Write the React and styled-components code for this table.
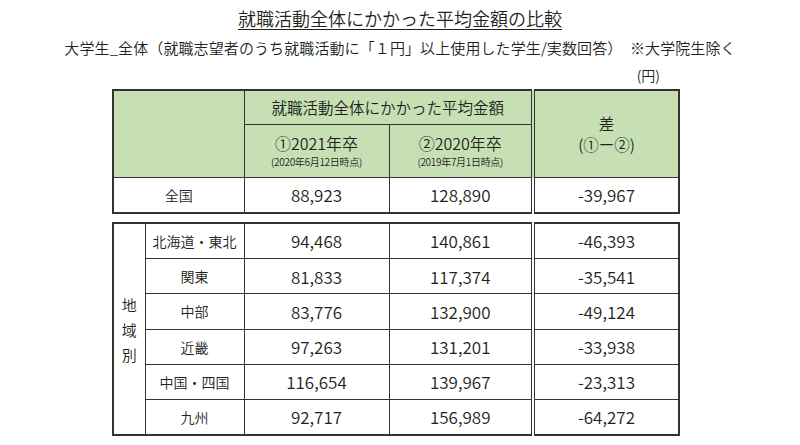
import React from 'react';
import styled, { createGlobalStyle } from 'styled-components';

const GlobalStyle = createGlobalStyle`
  html, body {
    margin: 0;
    padding: 0;
    background: #fff;
  }
  body {
    font-family: "Noto Sans CJK JP", "Noto Sans", sans-serif;
    font-weight: 350;
    color: #231f20;
  }
`;

const Page = styled.div`
  width: 800px;
  height: 445px;
  display: flex;
  flex-direction: column;
  align-items: center;
  overflow: hidden;
`;

const Title = styled.h1`
  margin: 6px 0 0;
  font-size: 18px;
  font-weight: 350;
  line-height: 24px;
  text-decoration: underline;
  text-underline-offset: 3px;
  text-decoration-thickness: 1px;
`;

const Subtitle = styled.div`
  margin-top: 8px;
  font-size: 15px;
  line-height: 20px;
  letter-spacing: 0.1px;
  white-space: nowrap;
`;

const Unit = styled.div`
  align-self: stretch;
  text-align: right;
  padding-right: 140px;
  font-size: 14px;
  line-height: 20px;
  margin-top: 7px;
`;

const Table = styled.table`
  align-self: flex-start;
  margin-left: 112px;
  width: 566px;
  border-collapse: collapse;
  table-layout: fixed;
  border: 2px solid #333;
  margin-top: ${p => p.$gap}px;
`;

const Cell = styled.td`
  border: 1.5px solid #333;
  padding: 0;
  text-align: center;
  vertical-align: middle;
  background: ${p => (p.$head ? '#c6e0b4' : '#fff')};
  height: ${p => p.$h}px;
  font-size: ${p => p.$size || 17}px;
  line-height: ${p => p.$lh || 1.15};
  ${p => p.$split && 'border-left: 4px double #333;'}
`;

const Small = styled.div`
  margin-top: 3px;
  font-size: 10px;
  line-height: 12px;
  letter-spacing: -0.3px;
`;

const Vertical = styled.div`
  display: flex;
  flex-direction: column;
  align-items: center;
  font-size: 15px;
  line-height: 25px;
`;

const regions = [
  ['北海道・東北', '94,468', '140,861', '-46,393'],
  ['関東', '81,833', '117,374', '-35,541'],
  ['中部', '83,776', '132,900', '-49,124'],
  ['近畿', '97,263', '131,201', '-33,938'],
  ['中国・四国', '116,654', '139,967', '-23,313'],
  ['九州', '92,717', '156,989', '-64,272'],
];

export default function App() {
  return (
    <Page>
      <GlobalStyle />
      <Title>就職活動全体にかかった平均金額の比較</Title>
      <Subtitle>
        大学生_全体（就職志望者のうち就職活動に「１円」以上使用した学生/実数回答）　※大学院生除く
      </Subtitle>
      <Unit>(円)</Unit>

      <Table $gap={4}>
        <colgroup>
          <col style={{ width: 131 }} />
          <col style={{ width: 145 }} />
          <col style={{ width: 144 }} />
          <col style={{ width: 146 }} />
        </colgroup>
        <tbody>
          <tr>
            <Cell $head rowSpan={2} />
            <Cell $head colSpan={2} $h={33} $size={15.5}>
              就職活動全体にかかった平均金額
            </Cell>
            <Cell $head rowSpan={2} $split $size={15.5} $lh={1.35}>
              差<br />(①ー②)
            </Cell>
          </tr>
          <tr>
            <Cell $head $h={52} $size={16}>
              ①2021年卒
              <Small>(2020年6月12日時点)</Small>
            </Cell>
            <Cell $head $h={52} $size={16}>
              ②2020年卒
              <Small>(2019年7月1日時点)</Small>
            </Cell>
          </tr>
          <tr>
            <Cell $h={34} $size={14}>全国</Cell>
            <Cell $h={34}>88,923</Cell>
            <Cell $h={34}>128,890</Cell>
            <Cell $h={34} $split>-39,967</Cell>
          </tr>
        </tbody>
      </Table>

      <Table $gap={8}>
        <colgroup>
          <col style={{ width: 32 }} />
          <col style={{ width: 99 }} />
          <col style={{ width: 145 }} />
          <col style={{ width: 144 }} />
          <col style={{ width: 146 }} />
        </colgroup>
        <tbody>
          {regions.map((r, i) => (
            <tr key={r[0]}>
              {i === 0 && (
                <Cell rowSpan={regions.length}>
                  <Vertical>
                    <span>地</span>
                    <span>域</span>
                    <span>別</span>
                  </Vertical>
                </Cell>
              )}
              <Cell $h={34.2} $size={14}>{r[0]}</Cell>
              <Cell $h={34.2}>{r[1]}</Cell>
              <Cell $h={34.2}>{r[2]}</Cell>
              <Cell $h={34.2} $split>{r[3]}</Cell>
            </tr>
          ))}
        </tbody>
      </Table>
    </Page>
  );
}
